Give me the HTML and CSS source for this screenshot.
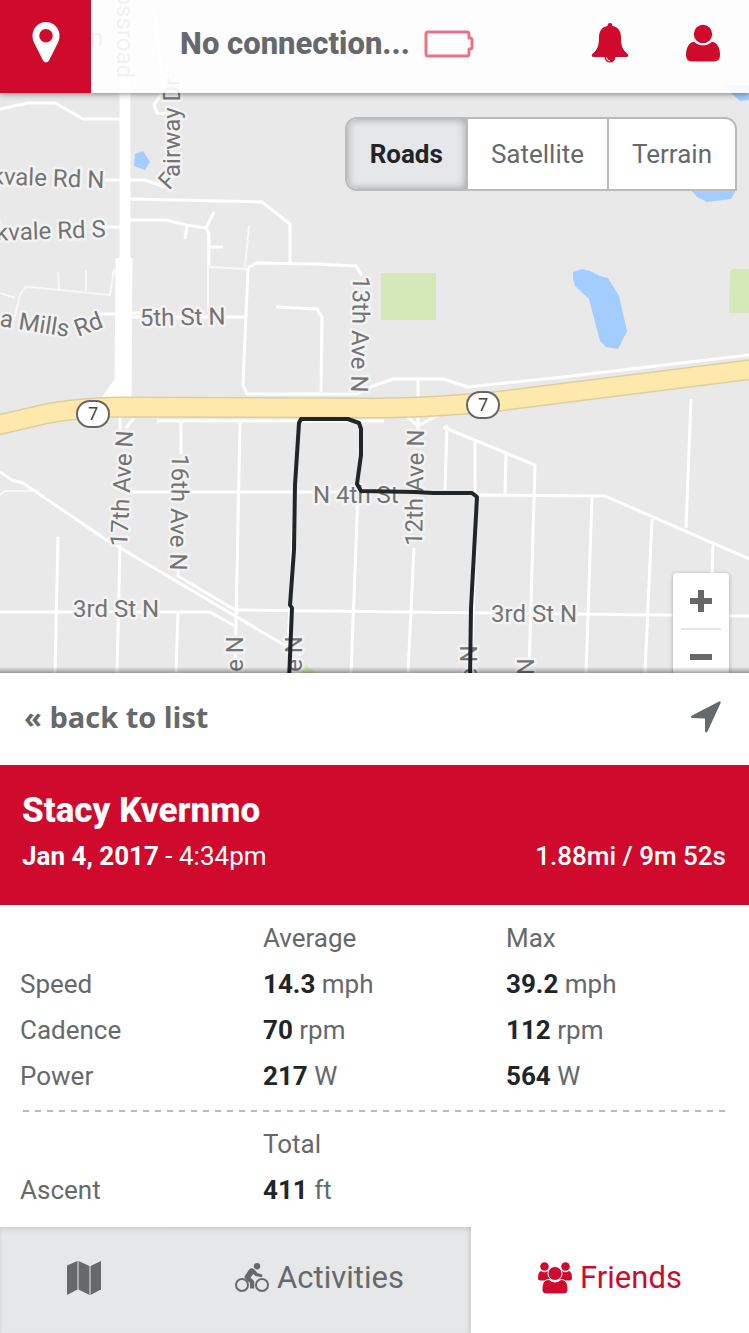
FILE: index.html
```html
<!DOCTYPE html>
<html lang="en">
<head>
<meta charset="utf-8">
<meta name="viewport" content="width=device-width, initial-scale=1">
<title>Ride details</title>
<link rel="stylesheet" href="styles.css">
</head>
<body>
<div class="app">
  <main class="stage">
    <svg class="map" viewBox="0 0 749 673" preserveAspectRatio="xMidYMin slice" role="img" aria-label="Route map">
      <g class="water">
        <path d="M135 154l8-3 7 11-5 8-11-4z"/>
        <path d="M573 272l9-3 8 2 10 5 8 2 11 18 8 35-9 18-12-2-6-6-11-42-14-13-2-8z"/>
        <path d="M691 190h45l-5 9-24 3-10-5z"/>
        <path d="M722 85h27v15l-9 1z"/>
        <path d="M340 55l10-8 6 6-5 9z"/>
      </g>
      <g class="park">
        <path d="M381 273h55v47h-55zM730 271l4-2h15v44h-20z"/>
        <path d="M302 663l30 20h-36z"/>
      </g>
      <g class="lane">
        <path d="M0 293l15 5M14 320l6-25 5-8 15 1 70 7 4-26M59 290l-1-18M86 291v-21"/>
        <path d="M209 267l38 2M245 267l4-41M208 232v80M0 495l5-4h34M158 30l-5-20"/>
      </g>
      <g class="road">
        <path d="M0 109l28-6h27l28 16h37M130 180h15l20 7M130 199l132 3 28 22v39M105 180h20M105 227h15"/>
        <path d="M130 220h36l20 5 20 3 8-16M187 226l-2 13M206 228l3 6v31M209 247h14M156 30l8 60-10 15 3 8 14 1"/>
        <path d="M100 314h25M130 317h115M130 313h12M248 268l8-5 60 1 40 2 6 10M248 268l-5 117 4 9h110l16-8 20-7h50l25 8 95-10 186-22M276 307l41 2 5 8-1 75"/>
        <path d="M157 421h227M181 422v32M240 422l-5 250M298 430l-5 100-5 120M358 493l-7 180M418 380v20M405 415l13 11 20-11M418 415v15M134 418l-8 10M120 415v15"/>
        <path d="M0 472l12 8 11 3 82 56 196 116M120 545l-3 128M178 570v6l57 34M58 537l-3 136M0 612h210l25 14M178 612l-2 61"/>
        <path d="M130 492h285M477 495l128 1 144 63M235 610l514 6M414 548l-6 125M447 425l-2 65M443 427l92 38-6 208M475 440v52M506 453l-1 42M477 495l-6 178M592 497l-6 176M652 519l-7 154M691 399l-5 129M713 545l-1 30"/>
      </g>
      <g class="avenue">
        <path d="M125 0v405"/>
        <path class="avenue-wide" d="M124 258l-1 145"/>
        <path class="fan" d="M114 380l-14 20h31v-20z"/>
      </g>
      <path class="highway-edge" d="M-6 426L45 414Q75 408 120 407L375 408Q430 408 500 401L755 369"/>
      <path class="highway" d="M-6 426L45 414Q75 408 120 407L375 408Q430 408 500 401L755 369"/>
      <g class="label">
        <text transform="translate(104 188) rotate(2)" text-anchor="end">kvale Rd N</text>
        <text transform="translate(106 237) rotate(-2)" text-anchor="end">kvale Rd S</text>
        <text transform="translate(-1 326) rotate(9)">a Mills</text>
        <text transform="translate(78 337) rotate(-21)">Rd</text>
        <text transform="translate(169 191) rotate(-48)">F</text>
        <text transform="translate(180 177) rotate(-90)">airway Dr</text>
        <text transform="translate(117 78) rotate(90)" text-anchor="end">ossroad</text>
        <text x="90" y="46">n</text>
        <text transform="translate(140 326) rotate(-1)">5th St N</text>
        <text transform="translate(353 276) rotate(91)">13th Ave N</text>
        <text transform="translate(127 547) rotate(-87)">17th Ave N</text>
        <text transform="translate(172 454) rotate(91)">16th Ave N</text>
        <text transform="translate(422 546) rotate(-89)">12th Ave N</text>
        <text transform="translate(243 636) rotate(-90)" text-anchor="end">e N</text>
        <text transform="translate(302 636) rotate(-90)" text-anchor="end">e N</text>
        <text transform="translate(477 645) rotate(-90)" text-anchor="end">e N</text>
        <text transform="translate(534 658) rotate(-90)" text-anchor="end">N</text>
        <text x="313" y="503">N 4th St</text>
        <text x="73" y="617">3rd St N</text>
        <text x="491" y="622">3rd St N</text>
      </g>
      <g class="shield">
        <rect x="77" y="401" width="32" height="26" rx="13"/>
        <text x="93" y="420">7</text>
        <rect x="467" y="392" width="32" height="26" rx="13"/>
        <text x="483" y="411">7</text>
      </g>
      <path class="route" d="M289 680L292 608L290 605L294 550L295 485L299 423L301 419H348L359 423L361 429V455L357 484L361 491L415 492L433 493H472L477 497L471 608L470 680"/>
    </svg>

    <header class="topbar">
      <button class="pin" aria-label="My location">
        <svg width="28" height="41" viewBox="0 0 28 41"><path fill="currentColor" fill-rule="evenodd" d="M14 0a13.500 13.500 0 0 1 13.500 13.500c0 4-1 6-2.500 9L17 38.500q-3 4-6 0L3 22.500C1.500 19.500.5 17.500.5 13.500A13.500 13.500 0 0 1 14 0zm0 7a6.800 6.800 0 1 0 0 13.600A6.800 6.800 0 0 0 14 7z"/></svg>
      </button>
      <div class="status">
        <span>No connection...</span>
        <svg width="50" height="28" viewBox="0 0 50 28"><path fill="none" stroke="#e5738a" stroke-width="3" stroke-linejoin="round" d="M4 2h39q2 0 2 2v4h1q2 0 2 2v7q0 2-2 2h-1v5q0 2-2 2H4q-2 0-2-2V4q0-2 2-2z"/></svg>
      </div>
      <button class="action" aria-label="Notifications">
        <svg width="38" height="40" viewBox="0 0 38 40"><path fill="currentColor" d="M19 0q2.500 0 2.500 3C27 4 30 8 30 14c0 10 2 13 7 17.500q1 2.500-2 2.500H24.500a5.500 5.500 0 0 1-11 0H3q-3 0-2-2.500C6 27 8 24 8 14 8 8 11 4 16.500 3q0-3 2.500-3z"/><path fill="none" stroke="#fff" d="M15.500 34.500q0 3 3.500 3.500"/></svg>
      </button>
      <button class="action" aria-label="Profile">
        <svg width="36" height="38" viewBox="0 0 36 38"><g fill="currentColor"><circle cx="18" cy="10" r="9.200"/><path d="M10 17.500q8 6.500 16 0c6 .5 9 6 9 13.500q0 6.500-6 6.500H7Q1 37.500 1 31c0-7.500 3-13 9-13.500z"/></g><path fill="none" stroke="#fff" stroke-width="1.200" d="M9 17q9 7.500 18 0"/></svg>
      </button>
    </header>

    <div class="layers" role="group" aria-label="Map type">
      <button class="layer layer-on" aria-pressed="true">Roads</button>
      <button class="layer" aria-pressed="false">Satellite</button>
      <button class="layer" aria-pressed="false">Terrain</button>
    </div>

    <div class="zoom">
      <button class="zoom-btn" aria-label="Zoom in"><svg width="22" height="22" viewBox="0 0 22 22"><path fill="currentColor" d="M8 0h6v8h8v6h-8v8H8v-8H0V8h8z"/></svg></button>
      <button class="zoom-btn" aria-label="Zoom out"><svg width="22" height="22" viewBox="0 0 22 22"><path fill="currentColor" d="M0 8h22v6H0z"/></svg></button>
    </div>
  </main>

  <section class="panel">
    <div class="panel-bar">
      <a class="back" href="#list">« back to list</a>
      <button class="locate" aria-label="Center on route">
        <svg width="30" height="32" viewBox="0 0 30 32"><path fill="currentColor" d="M28.500.3q1.500 0 1.200 1.500L16.500 30.500q-1.800 2-2.500-.5V17.500L1 17q-2-.8 0-2.500z"/></svg>
      </button>
    </div>
    <div class="summary">
      <h1 class="name">Stacy Kvernmo</h1>
      <div class="meta">
        <span><b>Jan 4, 2017</b> - 4:34pm</span>
        <span class="distance">1.88mi / 9m 52s</span>
      </div>
    </div>
    <div class="stats">
      <table class="grid">
        <thead><tr><td></td><th scope="col">Average</th><th scope="col">Max</th></tr></thead>
        <tbody>
          <tr><th scope="row">Speed</th><td><b>14.3</b> mph</td><td><b>39.2</b> mph</td></tr>
          <tr><th scope="row">Cadence</th><td><b>70</b> rpm</td><td><b>112</b> rpm</td></tr>
          <tr><th scope="row">Power</th><td><b>217</b> W</td><td><b>564</b> W</td></tr>
        </tbody>
      </table>
      <hr class="rule">
      <table class="grid">
        <thead><tr><td></td><th scope="col">Total</th><td></td></tr></thead>
        <tbody><tr><th scope="row">Ascent</th><td><b>411</b> ft</td><td></td></tr></tbody>
      </table>
    </div>
  </section>

  <nav class="tabs">
    <a class="tab" href="#map" aria-label="Map">
      <svg width="34" height="34" viewBox="0 0 34 34"><path fill="currentColor" d="M0 4.500L10.500 0v28.500L0 34zM11.500 0L22.500 5v29l-11-5.500zM23.500 5L34 0v28.500L23.500 34z"/></svg>
    </a>
    <a class="tab tab-shaded" href="#activities">
      <svg width="34" height="30" viewBox="0 0 34 30"><g fill="none" stroke="currentColor" stroke-width="2"><circle cx="7" cy="22" r="6"/><circle cx="27" cy="22" r="6"/></g><circle cx="22" cy="3.200" r="3.200" fill="currentColor"/><path fill="currentColor" d="M14.500 6q2.500-1.500 4.500 0l3.500 4 4.500 1.500q1 1.800-.5 2.800L20.500 13l-2-2-3 3.500 3 3q1 .8.800 2.500v5.500H15V20l-4.500-4q-2-1.800 0-4z"/></svg>
      <span>Activities</span>
    </a>
    <a class="tab tab-on" href="#friends" aria-current="page">
      <svg width="34" height="32" viewBox="0 0 34 32"><g fill="currentColor"><circle cx="6.500" cy="4.500" r="4.300"/><circle cx="27.500" cy="4.500" r="4.300"/><path d="M3 9q3.500 2.500 7 0 1 .8.500 3 0 3 1.500 5l-3 1.500H2.500Q0 18.500 0 16q0-6 3-7zM31 9q-3.500 2.500-7 0-1 .8-.5 3 0 3-1.500 5l3 1.500h6.500q2.500 0 2.500-2.500 0-6-3-7z"/></g><g fill="currentColor" stroke="#fff"><path d="M11 17.500q6 5 12 0c5 0 7 4 7 10q0 4.500-5 4.500H9q-5 0-5-4.500c0-6 2-10 7-10z"/><circle cx="17" cy="11.500" r="7"/></g></svg>
      <span>Friends</span>
    </a>
  </nav>
</div>
</body>
</html>
```
FILE: styles.css
```css
:root {
  --red: #cf0a2c;
  --gray: #66696b;
  --ink: #222527;
}

* { box-sizing: border-box; }

body {
  margin: 0;
  background: #fff;
  color: var(--gray);
  font: 26px/46px Roboto, "Liberation Sans", sans-serif;
}

button {
  display: flex;
  align-items: center;
  justify-content: center;
  padding: 0;
  border: 0;
  background: none;
  color: inherit;
  font: inherit;
  cursor: pointer;
}

a { color: inherit; text-decoration: none; }

svg { display: block; flex: none; }

.app {
  display: flex;
  flex-direction: column;
  min-height: 100vh;
}

/* Map */
.stage {
  position: relative;
  flex: 1;
  min-height: 320px;
  overflow: hidden;
  background: #e9e9e9;
}

.stage::after {
  content: "";
  position: absolute;
  inset: auto 0 0;
  height: 6px;
  background: linear-gradient(transparent, rgba(0, 0, 0, .35));
}

.map { position: absolute; inset: 0; width: 100%; height: 100%; }

.water { fill: #a3ccff; }
.park { fill: #d5e8b8; }
.lane, .road { fill: none; stroke: #fff; stroke-linejoin: round; }
.lane { stroke-width: 2; opacity: .7; }
.road { stroke-width: 3; }
.avenue { fill: none; stroke: #fff; stroke-width: 11; }
.avenue-wide { stroke-width: 17; }
.fan { fill: #fff; stroke: none; }
.highway, .highway-edge { fill: none; }
.highway-edge { stroke: #ddcf9c; stroke-width: 21; }
.highway { stroke: #ffe8ac; stroke-width: 18; }
.route { fill: none; stroke: #222527; stroke-width: 4; stroke-linejoin: round; }

.label {
  fill: #737373;
  stroke: #f3f3f3;
  stroke-width: 5;
  stroke-linejoin: round;
  paint-order: stroke;
  font-size: 24px;
}

.shield { fill: #fff; stroke: #666; stroke-width: 2; }
.shield text { fill: #444; stroke: none; font-size: 18px; text-anchor: middle; }

/* Top bar */
.topbar {
  position: absolute;
  inset: 0 0 auto;
  display: flex;
  height: 93px;
  background: rgba(255, 255, 255, .9);
  box-shadow: 0 1px 6px rgba(0, 0, 0, .45);
}

.pin { width: 91px; padding-bottom: 8px; background: var(--red); color: #fff; }

.status {
  display: flex;
  flex: 1;
  align-items: center;
  justify-content: center;
  gap: 14px;
  padding-bottom: 6px;
  font-size: 31px;
  font-weight: 800;
}

.action { width: 93px; padding-bottom: 8px; color: var(--red); }

.layers {
  position: absolute;
  top: 117px;
  right: 12px;
  display: flex;
  border: 2px solid #b9bbbd;
  border-radius: 12px 12px 0 12px;
  background: #fff;
  overflow: hidden;
}

.layer { height: 70px; padding: 0 23px; }
.layer + .layer { border-left: 2px solid #b9bbbd; }

.layer-on {
  background: #e6e7e9;
  box-shadow: inset 0 0 8px rgba(0, 0, 0, .35);
  color: var(--ink);
  font-weight: 700;
}

.zoom {
  position: absolute;
  right: 20px;
  bottom: -12px;
  width: 56px;
  padding: 0 8px;
  border-radius: 4px;
  background: #fff;
  box-shadow: 0 1px 4px rgba(0, 0, 0, .3);
}

.zoom-btn { width: 100%; height: 55px; color: #666; }
.zoom-btn + .zoom-btn { height: 57px; padding-bottom: 2px; border-top: 2px solid #e6e6e6; }

/* Ride panel */
.panel-bar {
  display: flex;
  align-items: center;
  justify-content: space-between;
  height: 92px;
  padding: 0 28px 4px 24px;
}

.back { font-family: "Open Sans", sans-serif; font-size: 29px; font-weight: 700; }

.summary { padding: 24px 23px 26px 22px; background: var(--red); color: #fff; }

.name { margin: 0; font-size: 35px; font-weight: 800; line-height: 44px; }

.meta { display: flex; flex-wrap: wrap; justify-content: space-between; }

.distance { font-weight: 500; }

.stats { padding: 10px 0 14px 20px; }

.grid { width: 100%; border-collapse: collapse; table-layout: fixed; }

.grid th, .grid td { height: 46px; padding: 0; font-weight: 400; text-align: left; }

.grid b { color: var(--ink); }

.rule {
  height: 2px;
  margin: 11px 24px 9px 3px;
  border: 0;
  background: repeating-linear-gradient(90deg, #bbb 0 6px, transparent 6px 12px);
}

/* Bottom tabs */
.tabs {
  display: grid;
  grid-template-columns: 168fr 303fr 278fr;
  height: 106px;
  background: #e6e7e9;
  box-shadow: inset 0 3px 5px -1px rgba(0, 0, 0, .12);
  font-size: 31px;
}

.tab {
  display: flex;
  align-items: center;
  justify-content: center;
  gap: 8px;
  padding-bottom: 5px;
}

.tab-shaded { box-shadow: inset -5px 0 5px -4px rgba(0, 0, 0, .15); }

.tab-on { background: #fff; color: var(--red); }
```
